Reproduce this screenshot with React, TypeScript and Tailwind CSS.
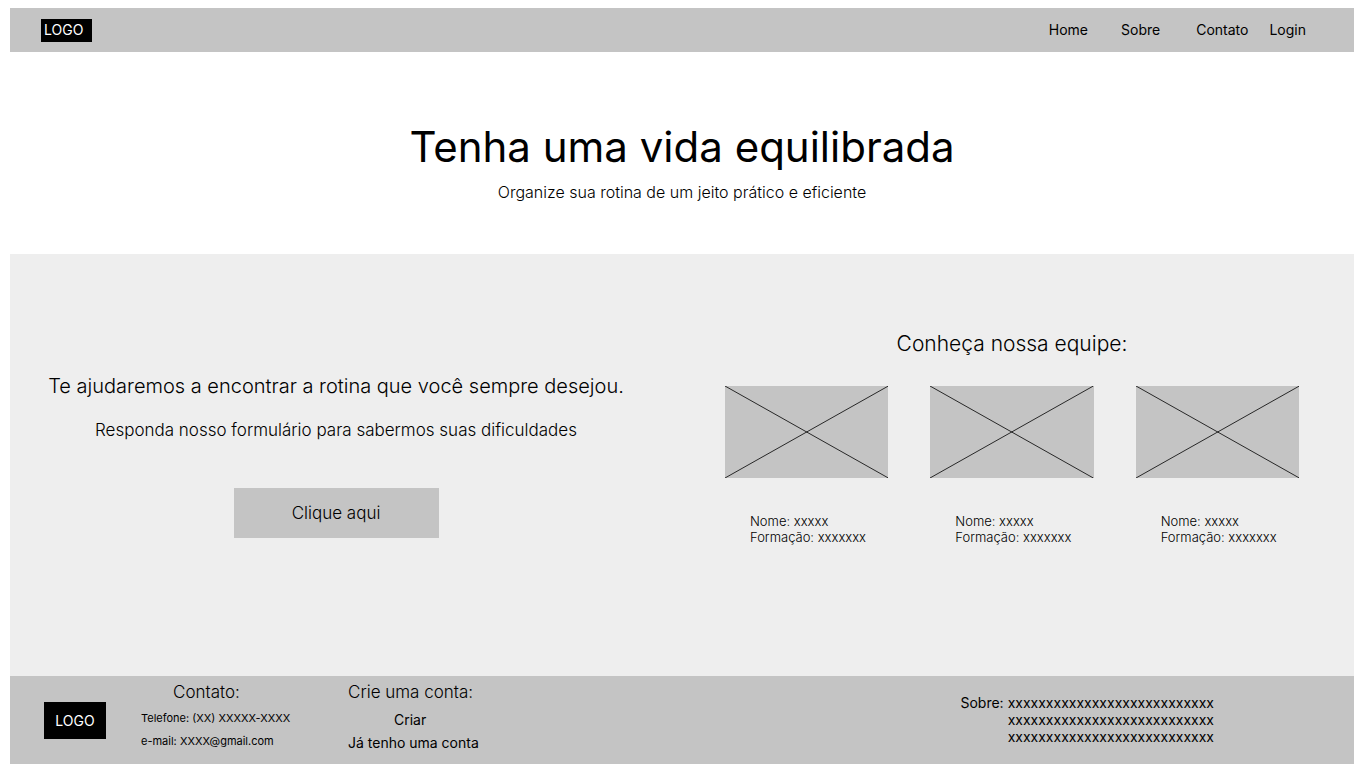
const members = [
  { name: "xxxxx", degree: "xxxxxxx" },
  { name: "xxxxx", degree: "xxxxxxx" },
  { name: "xxxxx", degree: "xxxxxxx" },
];

function Header() {
  return (
    <header className="flex h-11 items-center justify-between bg-[#c4c4c4] pl-[31px] pr-12">
      <a href="#" className="flex h-[23px] w-[51px] items-center bg-black pl-[3px] text-sm text-white">
        LOGO
      </a>
      <nav className="flex items-center text-sm">
        <a href="#" className="mr-[33px]">Home</a>
        <a href="#sobre" className="mr-9">Sobre</a>
        <a href="#contato" className="mr-[21px]">Contato</a>
        <a href="#login">Login</a>
      </nav>
    </header>
  );
}

function Hero() {
  return (
    <section className="flex flex-col items-center pt-[69px] pb-[51px] text-center">
      <h1 className="text-[42px] leading-[52px]">Tenha uma vida equilibrada</h1>
      <p className="mt-2 text-base leading-[22px] font-light">Organize sua rotina de um jeito prático e eficiente</p>
    </section>
  );
}

function Placeholder() {
  return (
    <svg
      viewBox="0 0 163 92"
      preserveAspectRatio="none"
      className="block h-[92px] w-full bg-[#c4c4c4]"
      role="img"
      aria-label="Foto"
    >
      <path d="M0 0L163 92M163 0L0 92" stroke="black" strokeWidth="0.8" fill="none" />
    </svg>
  );
}

function Main() {
  return (
    <main className="grid grid-cols-[652fr_692fr] bg-[#eeeeee] pb-[131px]">
      <section className="flex flex-col items-center pt-[119px] text-center">
        <h2 className="text-xl leading-[26px] font-light">Te ajudaremos a encontrar a rotina que você sempre desejou.</h2>
        <p className="mt-5 text-[17px] leading-[22px] font-light">Responda nosso formulário para sabermos suas dificuldades</p>
        <button type="button" className="mt-[47px] h-[50px] w-[205px] bg-[#c4c4c4] pt-0.5 text-[17px] font-light">
          Clique aqui
        </button>
      </section>
      <section className="pt-[76px] pr-[55px] pl-[63px]">
        <h2 className="text-center text-[21px] leading-[28px] font-light">Conheça nossa equipe:</h2>
        <div className="mt-7 grid grid-cols-3 gap-[42px]">
          {members.map((member, index) => (
            <article key={index}>
              <Placeholder />
              <p className="mt-[35px] pl-[25px] text-[13px] leading-4 font-light whitespace-nowrap">
                Nome: {member.name}
                <br />
                Formação: {member.degree}
              </p>
            </article>
          ))}
        </div>
      </section>
    </main>
  );
}

function Footer() {
  return (
    <footer className="flex h-[88px] items-start bg-[#c4c4c4] pr-[140px] pl-[34px]">
      <a href="#" className="mt-[26px] flex h-[37px] w-[62px] items-center justify-center bg-black text-sm leading-[18px] text-white">
        LOGO
      </a>
      <section id="contato" className="ml-[35px] w-[146px] pt-1.5">
        <h2 className="pl-8 text-[17px] leading-5 font-light">Contato:</h2>
        <p className="mt-2 text-[11px] leading-4 whitespace-nowrap">Telefone: (XX) XXXXX-XXXX</p>
        <p className="mt-[7px] text-[11px] leading-4">e-mail: XXXX@gmail.com</p>
      </section>
      <section id="login" className="ml-[61px] pt-1.5">
        <h2 className="text-[17px] leading-5 font-light">Crie uma conta:</h2>
        <a href="#criar" className="mt-2 ml-[46px] block text-sm leading-5">Criar</a>
        <a href="#entrar" className="mt-[3px] block text-sm leading-5">Já tenho uma conta</a>
      </section>
      <section id="sobre" className="ml-auto flex gap-1 pt-[18px] text-sm leading-[17px]">
        <h2>Sobre:</h2>
        <p>
          xxxxxxxxxxxxxxxxxxxxxxxxxxx
          <br />
          xxxxxxxxxxxxxxxxxxxxxxxxxxx
          <br />
          xxxxxxxxxxxxxxxxxxxxxxxxxxx
        </p>
      </section>
    </footer>
  );
}

export default function App() {
  return (
    <div className="bg-white px-[10px] pt-2 pb-[11px] font-['Inter',sans-serif] font-normal text-black">
      <Header />
      <Hero />
      <Main />
      <Footer />
    </div>
  );
}
